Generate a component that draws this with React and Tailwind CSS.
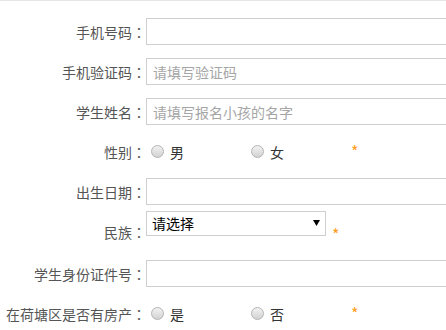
import React from 'react';

const Label = ({ children, className = '' }) => (
  <label className={`w-[146px] shrink-0 text-right text-[#555] leading-5 ${className}`}>
    {children}
    <span className="font-['Noto_Sans_CJK_TC',sans-serif]">：</span>
  </label>
);

const TextInput = ({ placeholder }) => (
  <input
    type="text"
    placeholder={placeholder}
    className="h-[27px] w-[320px] shrink-0 border border-[#cfcfcf] bg-white px-[6px] text-[14px] text-[#333] outline-none placeholder:text-[#a5a5a5]"
  />
);

const Star = ({ className = '' }) => <span className={`text-[16px] leading-5 text-[#ff9c1a] ${className}`}>*</span>;

const Radio = ({ name, label }) => (
  <label className="flex w-[100px] shrink-0 items-center">
    <span className="h-[13px] w-[13px] rounded-full border border-[#b4b4b4] bg-linear-to-b from-[#f2f2f2] to-[#d2d2d2]" />
    <input type="radio" name={name} className="hidden" />
    <span className="ml-[6px] leading-5 text-[#333]">{label}</span>
  </label>
);

export default function App() {
  return (
    <div className="min-h-[330px] w-[446px] overflow-hidden border-t border-[#e6e6e6] bg-white pt-[17px] font-['Noto_Sans_CJK_SC',sans-serif] text-[14px]">
      <form className="flex flex-col">
        <div className="flex items-center">
          <Label>手机号码</Label>
          <TextInput />
        </div>

        <div className="mt-[13px] flex items-center">
          <Label>手机验证码</Label>
          <TextInput placeholder="请填写验证码" />
        </div>

        <div className="mt-[13px] flex items-center">
          <Label>学生姓名</Label>
          <TextInput placeholder="请填写报名小孩的名字" />
        </div>

        <div className="mt-[13px] flex h-[27px] items-center">
          <Label>性别</Label>
          <div className="ml-[5px] flex items-center">
            <Radio name="sex" label="男" />
            <Radio name="sex" label="女" />
            <Star className="-mt-[2px]" />
          </div>
        </div>

        <div className="mt-[13px] flex items-center">
          <Label>出生日期</Label>
          <TextInput />
        </div>

        <div className="mt-[6px] flex items-start">
          <Label className="mt-[11px]">民族</Label>
          <div className="relative h-[25px] w-[180px] shrink-0">
            <select className="h-full w-full appearance-none border border-[#cfcfcf] bg-white pl-[5px] text-[14px] text-black outline-none">
              <option>请选择</option>
            </select>
            <svg className="pointer-events-none absolute right-[6px] top-[9px]" width="7" height="6" viewBox="0 0 7 6">
              <path d="M0 0H7L3.5 6Z" fill="#000" />
            </svg>
          </div>
          <Star className="ml-[6px] mt-[13px]" />
        </div>

        <div className="mt-[16px] flex items-center">
          <Label>学生身份证件号</Label>
          <TextInput />
        </div>

        <div className="mt-[13px] flex h-[27px] items-center">
          <Label>在荷塘区是否有房产</Label>
          <div className="ml-[5px] flex items-center">
            <Radio name="house" label="是" />
            <Radio name="house" label="否" />
            <Star className="-mt-[2px]" />
          </div>
        </div>
      </form>
    </div>
  );
}
